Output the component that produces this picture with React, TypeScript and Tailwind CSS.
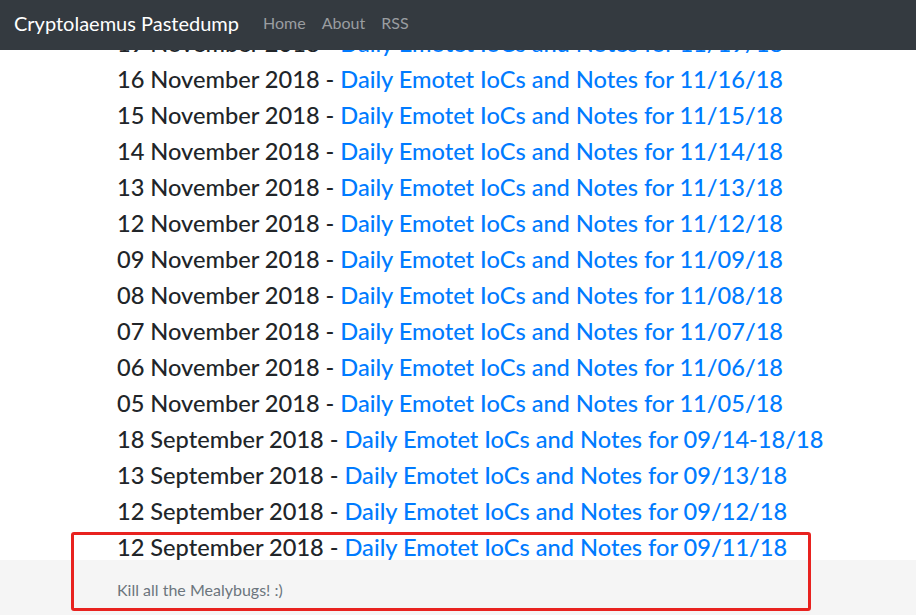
const posts: [string, string][] = [
  ["19 November 2018", "11/19/18"],
  ["16 November 2018", "11/16/18"],
  ["15 November 2018", "11/15/18"],
  ["14 November 2018", "11/14/18"],
  ["13 November 2018", "11/13/18"],
  ["12 November 2018", "11/12/18"],
  ["09 November 2018", "11/09/18"],
  ["08 November 2018", "11/08/18"],
  ["07 November 2018", "11/07/18"],
  ["06 November 2018", "11/06/18"],
  ["05 November 2018", "11/05/18"],
  ["18 September 2018", "09/14-18/18"],
  ["13 September 2018", "09/13/18"],
  ["12 September 2018", "09/12/18"],
  ["12 September 2018", "09/11/18"],
];

export default function App() {
  return (
    <div
      className="relative min-h-[615px] bg-white text-[#212529] overflow-hidden"
      style={{ fontFamily: '"Lato", "Open Sans", sans-serif' }}
    >
      <nav className="h-[50px] bg-[#343a40] flex items-center px-[14px] pb-[4px]">
        <span className="text-white text-[20px] mr-[24px]">Cryptolaemus Pastedump</span>
        <div className="flex gap-[16px] text-[16px] text-[#9a9da0]">
          <span>Home</span>
          <span>About</span>
          <span>RSS</span>
        </div>
      </nav>

      {/* page is scrolled: first entry sits half under the navbar */}
      <main className="overflow-hidden">
        <div className="mt-[-25px] pl-[117px]">
          {posts.map(([date, tag], i) => (
            <div key={i} className="h-[36px] leading-[36px] text-[23.6px] font-medium whitespace-nowrap">
              {date} - <a className="text-[#007bff]">Daily Emotet IoCs and Notes for {tag}</a>
            </div>
          ))}
        </div>
      </main>

      <footer className="mt-[-5px] bg-[#f5f5f5] h-[60px] pl-[117px] pt-[18px] text-[16px] text-[#6c757d]">
        Kill all the Mealybugs! :)
      </footer>

      {/* red annotation box */}
      <div className="absolute left-[71px] top-[532px] w-[740px] h-[79px] border-[3px] border-[#e8221f] rounded-[3px] pointer-events-none" />
    </div>
  );
}
